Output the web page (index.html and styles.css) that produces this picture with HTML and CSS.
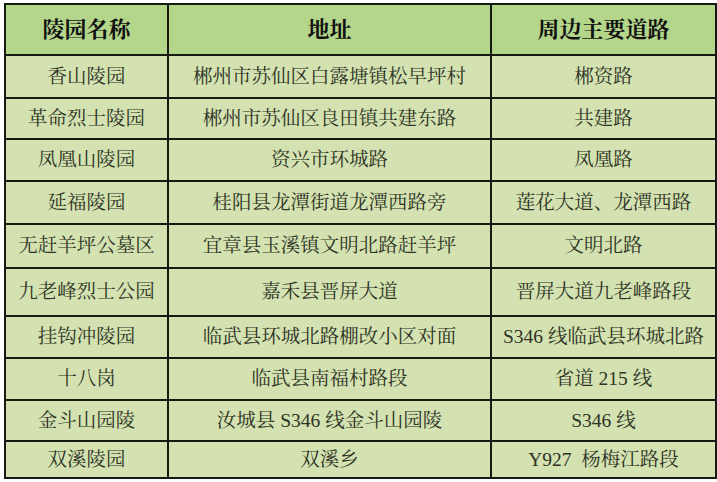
FILE: index.html
```html
<!DOCTYPE html>
<html lang="zh-CN">
<head>
<meta charset="utf-8">
<title>陵园</title>
<link rel="stylesheet" href="styles.css">
</head>
<body>
<div class="wrap">
<table class="grid">
  <colgroup>
    <col class="c1"><col class="c2"><col class="c3">
  </colgroup>
  <thead>
    <tr class="head"><th>陵园名称</th><th>地址</th><th>周边主要道路</th></tr>
  </thead>
  <tbody>
    <tr class="r1"><td>香山陵园</td><td>郴州市苏仙区白露塘镇松早坪村</td><td>郴资路</td></tr>
    <tr class="r2"><td>革命烈士陵园</td><td>郴州市苏仙区良田镇共建东路</td><td>共建路</td></tr>
    <tr class="r3"><td>凤凰山陵园</td><td>资兴市环城路</td><td>凤凰路</td></tr>
    <tr class="r4"><td>延福陵园</td><td>桂阳县龙潭街道龙潭西路旁</td><td>莲花大道、龙潭西路</td></tr>
    <tr class="r5"><td>无赶羊坪公墓区</td><td>宜章县玉溪镇文明北路赶羊坪</td><td>文明北路</td></tr>
    <tr class="r6"><td>九老峰烈士公园</td><td>嘉禾县晋屏大道</td><td>晋屏大道九老峰路段</td></tr>
    <tr class="r7"><td>挂钩冲陵园</td><td>临武县环城北路棚改小区对面</td><td>S346 线临武县环城北路</td></tr>
    <tr class="r8"><td>十八岗</td><td>临武县南福村路段</td><td>省道 215 线</td></tr>
    <tr class="r9"><td>金斗山园陵</td><td>汝城县 S346 线金斗山园陵</td><td>S346 线</td></tr>
    <tr class="r10"><td>双溪陵园</td><td>双溪乡</td><td>Y927&nbsp; 杨梅江路段</td></tr>
  </tbody>
</table>
</div>
</body>
</html>
```
FILE: styles.css
```css
html, body {
  margin: 0;
  padding: 0;
  background: #ffffff;
}
.wrap {
  padding: 3px 0 0 4px;
}
.grid {
  border-collapse: collapse;
  table-layout: fixed;
  width: 711px;
  font-family: "Liberation Serif", "Noto Serif CJK SC", "Noto Sans CJK SC", serif;
  color: #2e3326;
}
.c1 { width: 163px; }
.c2 { width: 323px; }
.c3 { width: 225px; }
.grid th, .grid td {
  border: 2px solid #161a12;
  text-align: center;
  vertical-align: middle;
  padding: 0;
  white-space: nowrap;
  overflow: hidden;
  line-height: 20px;
}
.grid th {
  background: #b3d68b;
  font-size: 22px;
  font-weight: bold;
  color: #111;
  height: 49px;
}
.grid td {
  background: #d3e2b0;
  font-size: 19.5px;
  font-weight: normal;
}
.r1 td { height: 41px; }
.r2 td { height: 39px; }
.r3 td { height: 40px; }
.r4 td { height: 41px; }
.r5 td { height: 42px; }
.r6 td { height: 46px; }
.r7 td { height: 40px; }
.r8 td { height: 40px; }
.r9 td { height: 39px; }
.r10 td { height: 35px; }
```
